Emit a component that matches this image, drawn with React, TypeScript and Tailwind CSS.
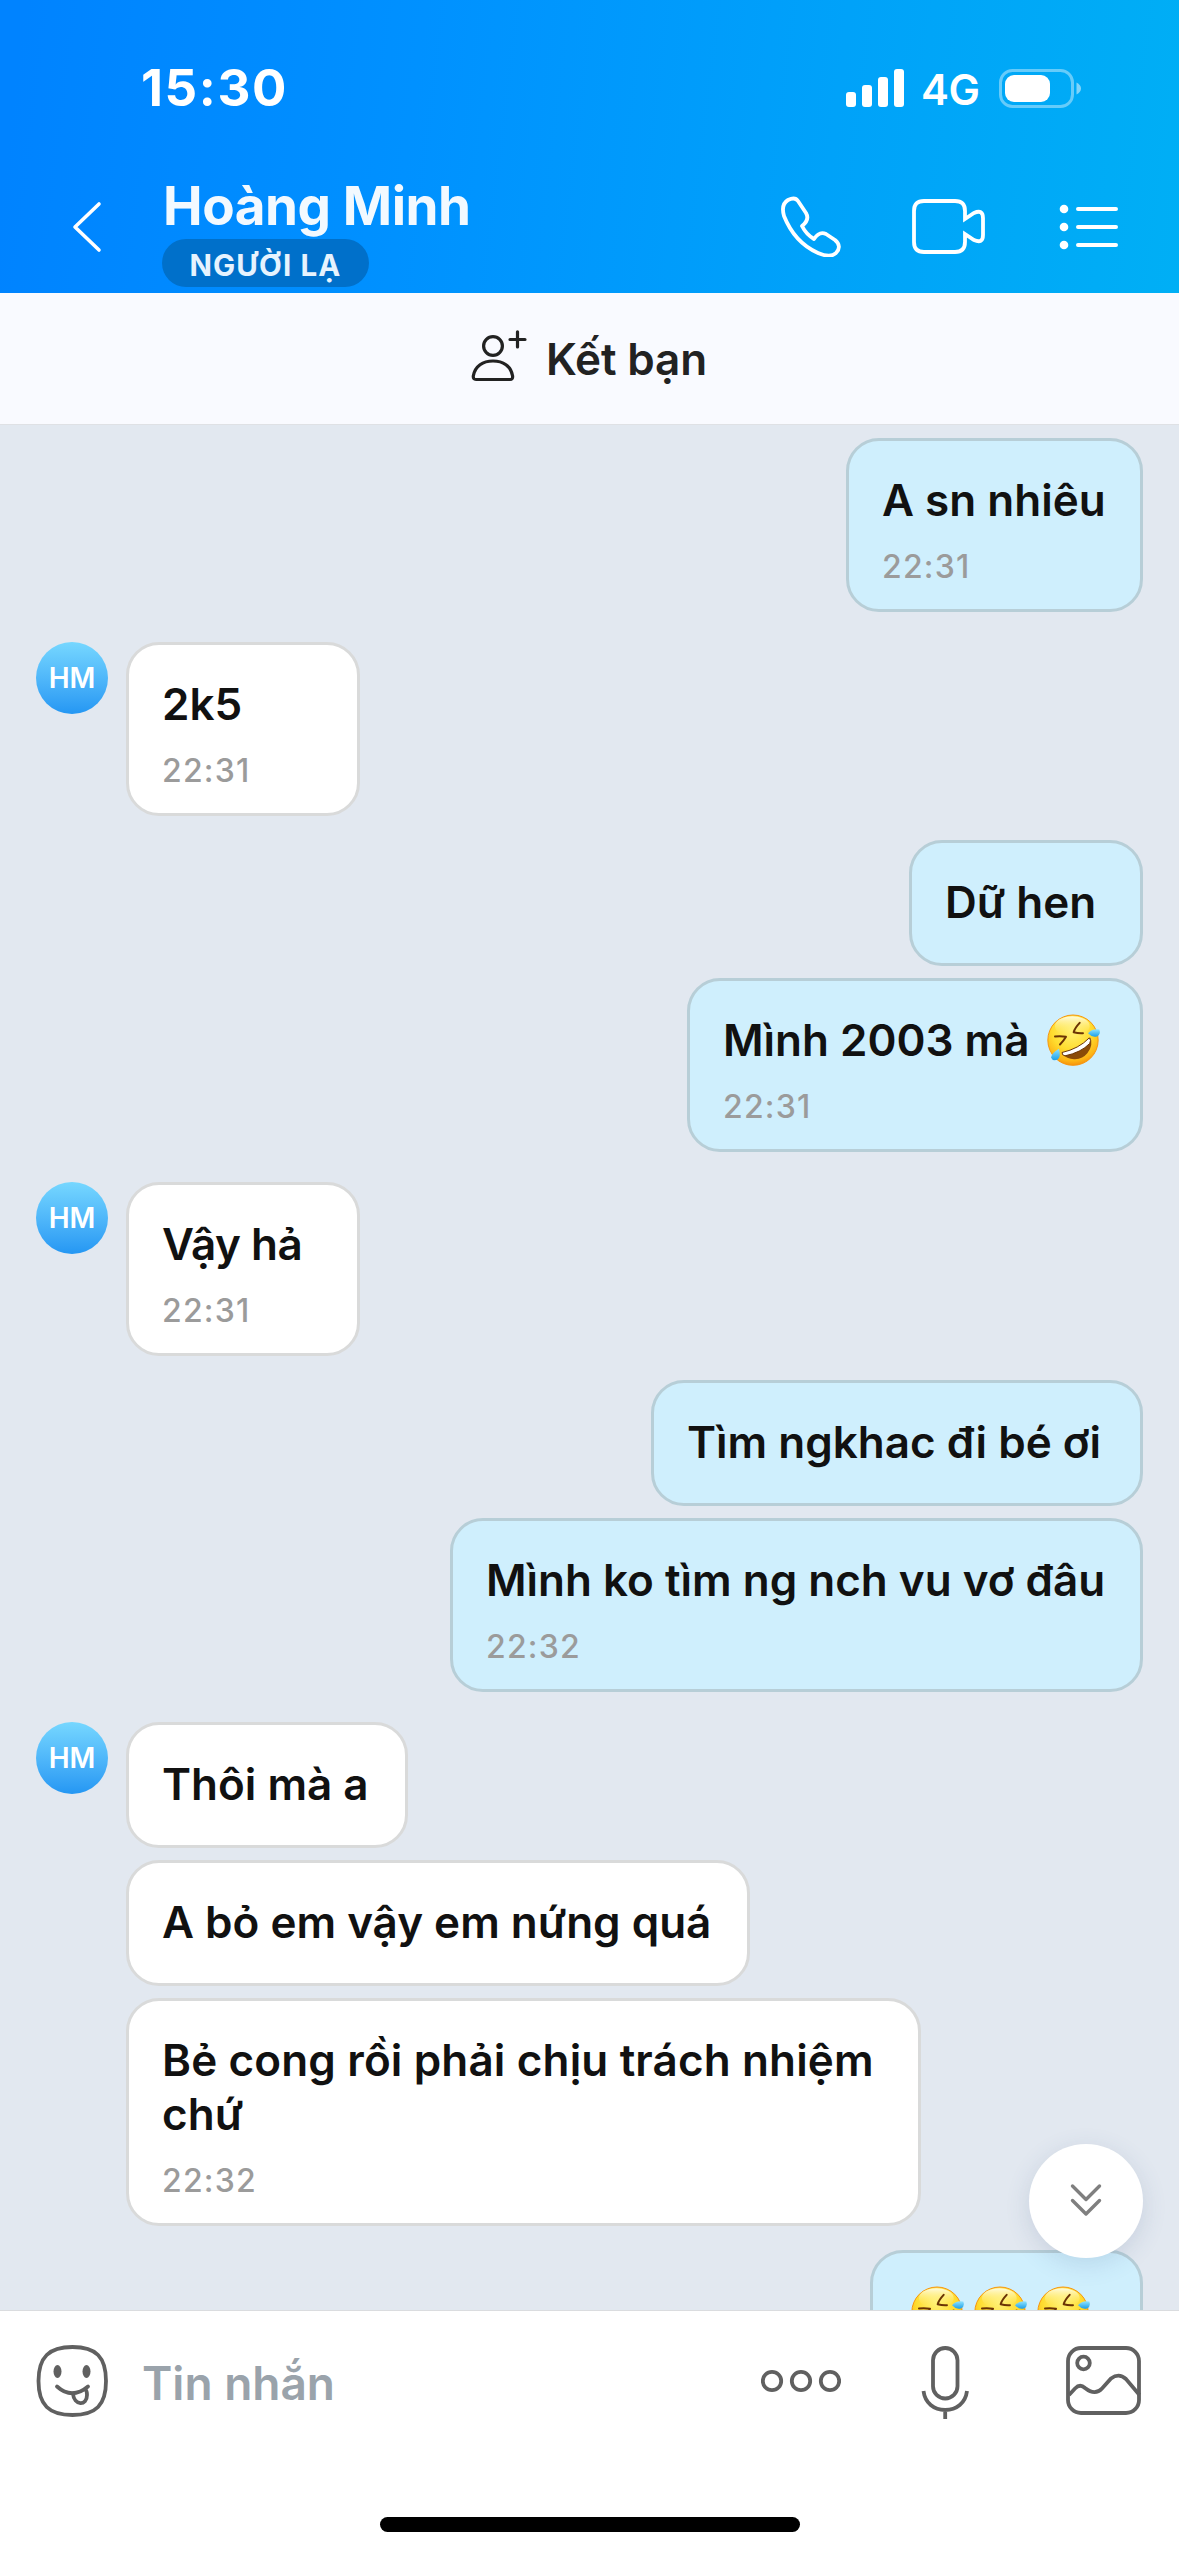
import React from "react";

type Message = {
  text: string;
  time?: string;
  laughs?: number;
  size: string;
  tracking?: string;
};

type Group = {
  mine: boolean;
  messages: Message[];
};

const groups: Group[] = [
  {
    mine: true,
    messages: [{ text: "A sn nhiêu", time: "22:31", size: "w-[297px] h-[174px]" }],
  },
  {
    mine: false,
    messages: [{ text: "2k5", time: "22:31", size: "w-[234px] h-[174px]" }],
  },
  {
    mine: true,
    messages: [
      { text: "Dữ hen", size: "w-[234px] h-[126px]" },
      { text: "Mình 2003 mà", laughs: 1, time: "22:31", size: "w-[456px] h-[174px]" },
    ],
  },
  {
    mine: false,
    messages: [{ text: "Vậy hả", time: "22:31", size: "w-[234px] h-[174px]", tracking: "tracking-[-0.5px]" }],
  },
  {
    mine: true,
    messages: [
      { text: "Tìm ngkhac đi bé ơi", size: "w-[492px] h-[126px]" },
      { text: "Mình ko tìm ng nch vu vơ đâu", time: "22:32", size: "w-[693px] h-[174px]" },
    ],
  },
  {
    mine: false,
    messages: [
      { text: "Thôi mà a", size: "w-[282px] h-[126px]" },
      { text: "A bỏ em vậy em nứng quá", size: "w-[624px] h-[126px]" },
      {
        text: "Bẻ cong rồi phải chịu trách nhiệm\nchứ",
        time: "22:32",
        size: "w-[795px] h-[228px]",
        tracking: "tracking-[0.15px]",
      },
    ],
  },
  {
    mine: true,
    messages: [{ text: "", laughs: 3, size: "w-[273px] h-[126px]" }],
  },
];

const LaughIcon = () => (
  <svg className="w-[54px] h-[53px] shrink-0" viewBox="0 0 162 158" fill="none">
    <defs>
      <radialGradient id="face" cx="0.48" cy="0.3" r="0.72">
        <stop offset="0" stopColor="#fff27a" />
        <stop offset="0.55" stopColor="#ffdc2e" />
        <stop offset="0.85" stopColor="#fdb515" />
        <stop offset="1" stopColor="#f48a0c" />
      </radialGradient>
      <linearGradient id="shine" x1="0" y1="0" x2="0" y2="1">
        <stop offset="0" stopColor="#fffbe0" />
        <stop offset="1" stopColor="#ffe84a" stopOpacity="0" />
      </linearGradient>
      <linearGradient id="tear" x1="0" y1="0" x2="0" y2="1">
        <stop offset="0" stopColor="#8fe3ff" />
        <stop offset="1" stopColor="#1b9fe8" />
      </linearGradient>
    </defs>
    <circle cx="78" cy="78" r="75.5" fill="url(#face)" stroke="#f7960f" strokeWidth="3" />
    <ellipse cx="76" cy="36" rx="52" ry="30" fill="url(#shine)" />
    <path d="M98 26 Q83 42 80 54 Q94 58 108 57" stroke="#6b3405" strokeWidth="6" strokeLinecap="round" strokeLinejoin="round" />
    <path d="M24 67 Q42 65 57 68 Q50 80 39 91" stroke="#6b3405" strokeWidth="6" strokeLinecap="round" strokeLinejoin="round" />
    <path d="M45 119 Q98 112 130 70 Q140 94 121 117 Q108 133 84 135 Q60 136 45 119Z" fill="#8a4b08" />
    <path d="M45 115 Q95 104 127 71 Q134 78 128 88 Q102 115 54 125 Q45 124 45 115Z" fill="#fff" stroke="#6b3405" strokeWidth="3" />
    <path d="M123 57 Q136 42 157 46 Q162 60 151 66 Q137 72 123 57Z" fill="url(#tear)" />
    <path d="M36 104 Q43 128 31 137 Q17 142 12 130 Q15 116 36 104Z" fill="url(#tear)" />
  </svg>
);

const StatusBar = () => (
  <div className="flex items-center h-[70px] mt-[53px] pl-[141px] pr-[97px]">
    <span className="text-[51px] leading-[70px] font-bold tracking-[1.6px]">15:30</span>
    <svg className="ml-auto w-[58px] h-[38px]" viewBox="0 0 58 38" fill="#fff">
      <rect x="0" y="23" width="10" height="15" rx="3" />
      <rect x="16" y="16" width="10" height="22" rx="3" />
      <rect x="32" y="8" width="10" height="30" rx="3" />
      <rect x="48" y="0" width="10" height="38" rx="3" />
    </svg>
    <span className="ml-[17px] mt-[3px] w-[61px] text-[42px] leading-[70px] font-semibold tracking-[-0.5px] whitespace-nowrap">4G</span>
    <svg className="ml-[17px] w-[83px] h-[39px]" viewBox="0 0 83 39" fill="none">
      <rect x="1.5" y="1.5" width="72" height="36" rx="12" stroke="#fff" strokeOpacity="0.4" strokeWidth="3" />
      <rect x="6" y="6" width="45" height="27" rx="9" fill="#fff" />
      <path d="M77.5 13.5 Q82 16 82 19.5 Q82 23 77.5 25.5Z" fill="#fff" fillOpacity="0.5" />
    </svg>
  </div>
);

const Header = () => (
  <header className="h-[293px] shrink-0 overflow-hidden text-white bg-[linear-gradient(97deg,#0083ff_2%,#0091ff_35%,#00a2f9_70%,#00aff5_100%)]">
    <StatusBar />
    <div className="flex h-[170px] pl-[72px]">
      <svg className="mt-[78px] w-[30px] h-[52px]" viewBox="0 0 30 52" fill="none" stroke="#fff" strokeWidth="3.6" strokeLinecap="round" strokeLinejoin="round">
        <path d="M27 3 L3 26 L27 49" />
      </svg>
      <div className="ml-[60px] pt-[51px]">
        <h1 className="ml-px text-[53px] leading-[64px] font-bold tracking-[-0.45px] text-[#f2f9ff] whitespace-nowrap">Hoàng Minh</h1>
        <div className="mt-px flex items-center justify-center w-[207px] h-[48px] pt-[4px] rounded-full bg-[#0070ca] text-[29.5px] font-bold tracking-[1.1px] text-[#e6f3fe] whitespace-nowrap">
          NGƯỜI LẠ
        </div>
      </div>
      <div className="ml-auto mr-[60px] pt-[72px] flex">
        <svg className="w-[60px] h-[62px]" viewBox="0 0 60 62" fill="none" stroke="#fff" strokeWidth="3.8" strokeLinejoin="round">
          <path d="M7 5 C11 3 15 3 17 6 L25 18 C28 23 26 27 21 31 C24 37 28 41 33 44 C37 38 41 37 45 39 L54 45 C59 49 59 54 55 58 C51 62 44 61 37 58 C19 50 9 36 3 21 C1 14 2 8 7 5Z" />
        </svg>
        <svg className="ml-[71px] mt-[4px] w-[74px] h-[56px]" viewBox="0 0 74 56" fill="none" stroke="#fff" strokeWidth="3.8">
          <path d="M53 20 V12 Q53 2 43 2 H12 Q2 2 2 12 V43 Q2 53 12 53 H43 Q53 53 53 43 V35 L62 41 Q71 45 71 36 V19 Q71 10 62 14Z" />
        </svg>
        <svg className="ml-[73px] mt-[9px] w-[60px] h-[46px]" viewBox="0 0 60 46" fill="#fff">
          <circle cx="5" cy="5" r="4.3" />
          <circle cx="5" cy="23" r="4.3" />
          <circle cx="5" cy="41" r="4.3" />
          <path d="M19 5 H57 M19 23 H57 M19 41 H57" stroke="#fff" strokeWidth="4" strokeLinecap="round" />
        </svg>
      </div>
    </div>
  </header>
);

const AddFriend = () => (
  <div className="flex justify-center h-[132px] shrink-0 bg-[#f9faff] border-b border-[#dfe1e5] text-[#222]">
    <svg className="mt-[37px] w-[57px] h-[53px]" viewBox="0 0 57 53" fill="none" stroke="#222" strokeWidth="3.2" strokeLinecap="round" strokeLinejoin="round">
      <circle cx="23" cy="16" r="9.4" />
      <path d="M6 49.5 Q3 49.5 3.3 46 C5 36 13 31 23 31 C33 31 41 36 42.6 46 Q43 49.5 40 49.5Z" />
      <path d="M47.5 1.8 V17 M40 9.5 H55" />
    </svg>
    <span className="ml-[19px] mt-[34px] mr-[2px] text-[44px] leading-[64px] font-semibold tracking-[-0.1px] whitespace-nowrap">Kết bạn</span>
  </div>
);

const Bubble = ({ message, mine }: { message: Message; mine: boolean }) => (
  <div
    className={`${message.size} shrink-0 rounded-[33px] border-3 pt-[32px] pl-[33px] ${
      mine ? "bg-[#cfeffd] border-[#b7ced7]" : "bg-white border-[#d9dada]"
    }`}
  >
    <div className={`flex text-[44px] leading-[54px] font-[570] text-[#111] whitespace-pre ${message.tracking ?? ""}`}>
      {message.text && <span>{message.text}</span>}
      {message.laughs && (
        <span className={`flex gap-[9px] pt-px ${message.text ? "ml-[18px]" : "ml-[5px]"}`}>
          {Array.from({ length: message.laughs }, (_, i) => (
            <LaughIcon key={i} />
          ))}
        </span>
      )}
    </div>
    {message.time && (
      <div className="mt-[18px] text-[32px] leading-[44px] font-[550] tracking-[1.2px] text-[#9b9b9b]">{message.time}</div>
    )}
  </div>
);

const MessageGroup = ({ group }: { group: Group }) => (
  <div className={`flex first:mt-0 ${group.mine ? "justify-end mt-[24px]" : "mt-[30px]"}`}>
    {!group.mine && (
      <div className="mr-[18px] flex items-center justify-center w-[72px] h-[72px] rounded-full bg-linear-to-b from-[#76d7ff] to-[#2497f3] text-[28px] font-semibold text-white">
        HM
      </div>
    )}
    <div className={`flex flex-col gap-3 ${group.mine ? "items-end" : "items-start"}`}>
      {group.messages.map((message, i) => (
        <Bubble key={i} message={message} mine={group.mine} />
      ))}
    </div>
  </div>
);

const Composer = () => (
  <footer className="h-[246px] shrink-0 flex flex-col bg-white border-t border-[#dadcdf]">
    <div className="flex h-[140px] pl-[36px] pr-[37px]">
      <svg className="mt-[33px] w-[73px] h-[74px]" viewBox="0 0 73 74" fill="none" stroke="#606060" strokeWidth="3.8" strokeLinecap="round">
        <path d="M36.5 3 C60 3 70 13 70 37 C70 61 60 71 36.5 71 C13 71 2.5 61 2.5 37 C2.5 13 13 3 36.5 3Z" />
        <ellipse cx="21.5" cy="27.5" rx="4" ry="6.5" fill="#606060" stroke="none" />
        <ellipse cx="50.5" cy="27.5" rx="4" ry="6.5" fill="#606060" stroke="none" />
        <path d="M21 42.5 Q36 56 52 42.5" />
        <path d="M37 49.5 C38 62 51 62 51 51 Q51 47 49.5 45.5" />
      </svg>
      <span className="ml-[33px] mt-[42px] text-[46px] leading-[60px] font-[570] text-[#9aa3ab] whitespace-nowrap">Tin nhắn</span>
      <svg className="ml-auto mt-[58px] w-[80px] h-[24px]" viewBox="0 0 80 24" fill="none" stroke="#606060" strokeWidth="3.8">
        <circle cx="11" cy="12" r="9.2" />
        <circle cx="40" cy="12" r="9.2" />
        <circle cx="69" cy="12" r="9.2" />
      </svg>
      <svg className="ml-[80px] mt-[35px] w-[48px] h-[74px]" viewBox="0 0 48 74" fill="none" stroke="#606060" strokeWidth="3.8">
        <rect x="12" y="2" width="24.5" height="50.5" rx="12.25" />
        <path d="M2.5 45 C4 57 13 64 24.2 64 C35.5 64 44.5 57 46 45 M24.2 64 V73" />
      </svg>
      <svg className="ml-[97px] mt-[35px] w-[76px] h-[69px]" viewBox="0 0 76 69" fill="none" stroke="#606060" strokeWidth="3.8">
        <rect x="2" y="2" width="71" height="65" rx="13" />
        <circle cx="17.5" cy="17" r="6.3" />
        <path d="M3 49 L9 42.5 Q14 37.5 19 42 Q29 50 36 42.5 L45 32.5 Q53 26.5 60 33 L73.5 49" />
      </svg>
    </div>
    <div className="mx-auto mt-[66px] w-[420px] h-[15px] rounded-full bg-black" />
  </footer>
);

const App = () => {
  return (
    <div className="flex flex-col w-[1179px] h-[2556px] overflow-hidden bg-[#e2e8f0] font-['Inter','Liberation_Sans',sans-serif]">
      <Header />
      <AddFriend />

      {/* Conversation */}
      <main className="relative flex-1 min-h-0 overflow-hidden px-[36px] pt-[13px]">
        {groups.map((group, i) => (
          <MessageGroup key={i} group={group} />
        ))}

        {/* Jump to latest */}
        <button className="absolute right-[36px] bottom-[52px] flex items-center justify-center w-[114px] h-[114px] rounded-full bg-white shadow-[0_6px_24px_rgba(60,90,130,0.16)]">
          <svg className="-mt-[2px] w-[32px] h-[34px]" viewBox="0 0 32 34" fill="none" stroke="#7f7f7f" strokeWidth="3.4" strokeLinecap="round" strokeLinejoin="round">
            <path d="M2.5 3 L16 16.5 L29.5 3 M2.5 17.5 L16 31 L29.5 17.5" />
          </svg>
        </button>
      </main>

      <Composer />
    </div>
  );
};

export default App;
